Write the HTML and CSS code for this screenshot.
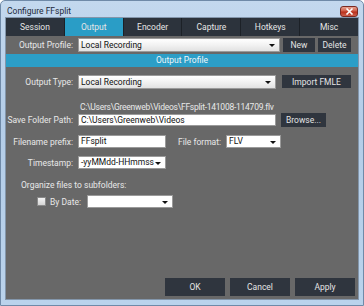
FILE: index.html
```html
<!DOCTYPE html>
<html lang="en">
  <head>
    <meta charset="UTF-8" />
    <title>Configure FFsplit</title>
    <link rel="stylesheet" href="styles.css">
  </head>
  <body>
    <div class="window">
      <!-- Title bar -->
      <div class="titlebar">
        <div class="title">Configure FFsplit</div>
        <div class="close">
          <svg width="9" height="7" viewBox="0 0 9 7"><path d="M1.5 0.5 L7.5 6.5 M7.5 0.5 L1.5 6.5" stroke="#fff" stroke-width="1.6"/></svg>
        </div>
      </div>

      <div class="client">
        <!-- Tabs -->
        <div class="tabs">
          <div class="tab">Session</div>
          <div class="tab active">Output</div>
          <div class="tab">Encoder</div>
          <div class="tab">Capture</div>
          <div class="tab">Hotkeys</div>
          <div class="tab">Misc</div>
        </div>

        <!-- Profile -->
        <div class="row profile-row">
          <div class="label">Output Profile:</div>
          <div class="select light wide-profile">Local Recording<span class="arrow"></span></div>
          <div class="btn btn-new">New</div>
          <div class="btn btn-delete">Delete</div>
        </div>

        <div class="band">Output Profile</div>

        <div class="row type-row">
          <div class="label">Output Type:</div>
          <div class="select light wide-type">Local Recording<span class="arrow"></span></div>
          <div class="btn btn-import">Import FMLE</div>
        </div>

        <div class="path">C:\Users\Greenweb\Videos\FFsplit-141008-114709.flv</div>

        <div class="row save-row">
          <div class="label">Save Folder Path:</div>
          <div class="input wide-save">C:\Users\Greenweb\Videos</div>
          <div class="btn btn-browse">Browse...</div>
        </div>

        <div class="row prefix-row">
          <div class="label">Filename prefix:</div>
          <div class="input short">FFsplit</div>
          <div class="label-inline">File format:</div>
          <div class="select format">FLV<span class="arrow"></span></div>
        </div>

        <div class="row ts-row">
          <div class="label">Timestamp:</div>
          <div class="select short">-yyMMdd-HHmmss<span class="arrow"></span></div>
        </div>

        <div class="organize">Organize files to subfolders:</div>

        <div class="row date-row">
          <div class="checkbox"></div>
          <div class="check-label">By Date:</div>
          <div class="select date"><span class="arrow"></span></div>
        </div>

        <!-- Footer buttons -->
        <div class="footer">
          <div class="btn btn-big">OK</div>
          <div class="btn btn-big">Cancel</div>
          <div class="btn btn-big">Apply</div>
        </div>
      </div>
    </div>
  </body>
</html>
```

FILE: styles.css
```css
body {
  margin: 0;
  padding: 0;
  font-family: "Liberation Sans Narrow", "Roboto", sans-serif;
  font-size: 8.5px;
}

.window {
  width: 364px;
  height: 306px;
  box-sizing: border-box;
  background: linear-gradient(#c3d8ee, #b4cde8 40%, #bad3ec);
  border: 1px solid #6f8aa8;
  border-radius: 5px 5px 0 0;
  padding: 0 4px 5px 4px;
  display: flex;
  flex-direction: column;
}

.titlebar {
  height: 16px;
  display: flex;
  align-items: center;
  justify-content: space-between;
}

.title {
  color: #1e2a3a;
  font-size: 8.5px;
  padding-left: 2px;
  padding-top: 3px;
}

.close {
  width: 18px;
  height: 11px;
  margin-top: 4px;
  margin-right: 1px;
  box-sizing: border-box;
  border: 1px solid #7a2a22;
  border-radius: 3px;
  background: linear-gradient(#e6a493, #cf5b45 45%, #b8301c 55%, #d0614c);
  display: flex;
  align-items: center;
  justify-content: center;
}

.client {
  flex: 1;
  background-color: #686868;
  border: 1px solid #8396ab;
  display: flex;
  flex-direction: column;
  color: #e8e8e8;
}

.tabs {
  display: flex;
  height: 18px;
  background-color: #2c333c;
}

.tab {
  flex: 1;
  display: flex;
  align-items: center;
  justify-content: center;
  color: #e6e6e6;
  border-right: 1px solid #1c2127;
}

.tab:last-child {
  border-right: none;
}

.tab.active {
  background-color: #2a9dc6;
}

.row {
  display: flex;
  align-items: center;
}

.label {
  width: 67px;
  text-align: right;
  margin-right: 5px;
  flex-shrink: 0;
}

.profile-row {
  height: 18px;
}

.band {
  height: 13px;
  background-color: #2c9ec7;
  color: #eef6fa;
  text-align: center;
  line-height: 13px;
}

.type-row {
  margin-top: 8px;
  height: 13px;
}

.path {
  margin-top: 14px;
  height: 11px;
  line-height: 11px;
  padding-left: 74px;
  letter-spacing: -0.25px;
}

.save-row {
  height: 14px;
}

.prefix-row {
  margin-top: 8px;
  height: 13px;
}

.ts-row {
  margin-top: 8px;
  height: 13px;
}

.organize {
  margin-top: 10px;
  height: 12px;
  line-height: 12px;
  padding-left: 15px;
}

.date-row {
  margin-top: 4px;
  height: 13px;
}

.input,
.select {
  position: relative;
  box-sizing: border-box;
  height: 13px;
  background-color: #ffffff;
  border: 1px solid #9a9a9a;
  color: #111;
  padding-left: 2px;
  line-height: 11px;
}

.select.light {
  height: 14px;
  line-height: 12px;
  background: linear-gradient(#ffffff, #f2f2f2 50%, #e2e2e2);
}

.arrow {
  position: absolute;
  right: 4px;
  top: 50%;
  margin-top: -1px;
  border-left: 3px solid transparent;
  border-right: 3px solid transparent;
  border-top: 3px solid #111;
}

.wide-profile { width: 202px; }
.wide-type { width: 198px; height: 12px; line-height: 10px; }
.wide-save { width: 198px; height: 12px; line-height: 10px; }
.short { width: 88px; }
.format { width: 55px; }
.date { width: 86px; margin-left: 6px; }

.label-inline {
  margin-left: 12px;
  margin-right: 5px;
}

.btn {
  box-sizing: border-box;
  height: 14px;
  background-color: #2f353e;
  color: #e4e4e4;
  display: flex;
  align-items: center;
  justify-content: center;
}

.btn-new { width: 32px; margin-left: 3px; }
.btn-delete { width: 33px; margin-left: 3px; }
.btn-import { width: 69px; margin-left: 6px; height: 13px; }
.btn-browse { width: 45px; margin-left: 5px; }

.checkbox {
  width: 7px;
  height: 7px;
  margin-left: 31px;
  background: linear-gradient(#f4f4f4, #d4d4d4);
  border: 1px solid #8a8a8a;
}

.check-label {
  margin-left: 4px;
}

.footer {
  margin-top: auto;
  display: flex;
  justify-content: flex-end;
  gap: 5px;
  padding: 0 3px 3px 0;
}

.btn-big {
  width: 60px;
  height: 18px;
}
```
